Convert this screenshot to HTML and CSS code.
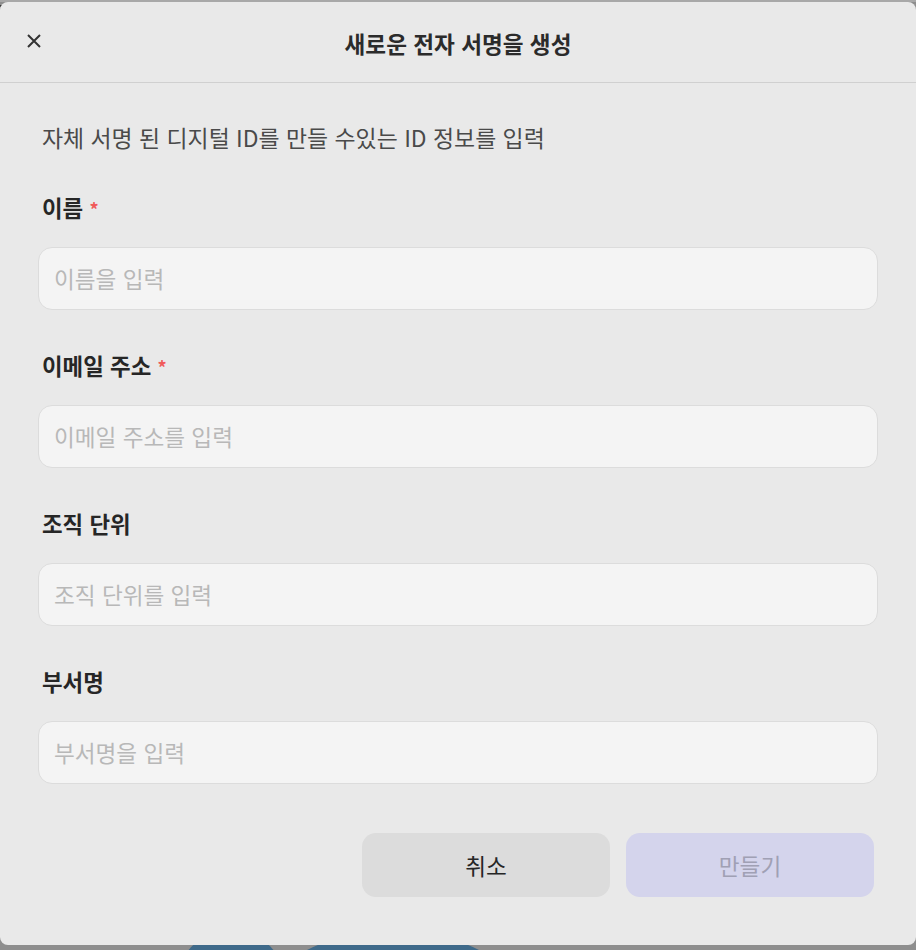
FILE: index.html
```html
<!DOCTYPE html>
<html lang="ko">
<head>
  <meta charset="UTF-8">
  <meta name="viewport" content="width=device-width, initial-scale=1.0">
  <title>새로운 전자 서명을 생성</title>
  <link rel="stylesheet" href="styles.css">
</head>
<body>
  <div class="page">
    <div class="page-top">
      <svg width="520" height="2" viewBox="0 0 520 2">
        <g fill="#3c3c3c">
          <rect x="0" y="0" width="38" height="2"/>
          <rect x="58" y="0" width="12" height="2"/>
          <rect x="82" y="0" width="11" height="2"/>
          <rect x="114" y="0" width="12" height="2"/>
          <rect x="134" y="0" width="12" height="2"/>
          <rect x="158" y="0" width="41" height="2"/>
          <rect x="209" y="0" width="12" height="2"/>
          <rect x="282" y="0" width="10" height="2"/>
          <rect x="303" y="0" width="11" height="2"/>
          <rect x="330" y="0" width="12" height="2"/>
          <rect x="356" y="0" width="24" height="2"/>
          <rect x="390" y="0" width="39" height="2"/>
          <rect x="441" y="0" width="12" height="2"/>
          <rect x="457" y="0" width="10" height="2"/>
          <rect x="474" y="0" width="11" height="2"/>
          <rect x="508" y="0" width="11" height="2"/>
        </g>
      </svg>
    </div>
    <div class="page-art">
      <span class="blob blob-a"></span>
      <span class="blob blob-b"></span>
    </div>
  </div>

  <div class="overlay">
    <div class="dialog">
      <div class="dialog-header">
        <button class="close-btn" aria-label="닫기">
          <svg width="16" height="16" viewBox="0 0 16 16">
            <path d="M2 2 L14 14 M14 2 L2 14" stroke="#333" stroke-width="2" fill="none"/>
          </svg>
        </button>
        <h1>새로운 전자 서명을 생성</h1>
      </div>

      <div class="dialog-body">
        <p class="intro">자체 서명 된 디지털 ID를 만들 수있는 ID 정보를 입력</p>

        <div class="field">
          <label for="name">이름 <span class="req">*</span></label>
          <input type="text" id="name" placeholder="이름을 입력">
        </div>
        <div class="field">
          <label for="email">이메일 주소 <span class="req">*</span></label>
          <input type="text" id="email" placeholder="이메일 주소를 입력">
        </div>
        <div class="field">
          <label for="unit">조직 단위</label>
          <input type="text" id="unit" placeholder="조직 단위를 입력">
        </div>
        <div class="field">
          <label for="dept">부서명</label>
          <input type="text" id="dept" placeholder="부서명을 입력">
        </div>

        <div class="actions">
          <button class="btn btn-cancel">취소</button>
          <button class="btn btn-create" disabled>만들기</button>
        </div>
      </div>
    </div>
  </div>
</body>
</html>
```

FILE: styles.css
```css
body {
  margin: 0;
  font-family: 'Noto Sans CJK KR', 'Noto Sans', sans-serif;
  background-color: #8e8e8e;
  height: 950px;
  overflow: hidden;
}
.page {
  height: 950px;
  position: relative;
}
.page-top {
  height: 2px;
  background-color: #a8a8a8;
  line-height: 0;
}
.page-art {
  position: absolute;
  left: 0;
  bottom: 0;
  width: 100%;
  height: 20px;
  overflow: hidden;
}
.blob {
  position: absolute;
  top: 0;
  border-radius: 50%;
  background-color: #3f6a8a;
}
.blob-a {
  left: 176px;
  width: 110px;
  height: 110px;
}
.blob-b {
  left: 198px;
  width: 390px;
  height: 390px;
}
.overlay {
  position: absolute;
  top: 0;
  left: 0;
  right: 0;
  bottom: 0;
  padding-top: 2px;
}
.dialog {
  background-color: #e9e9e9;
  border-radius: 8px;
  height: 943px;
}
.dialog-header {
  height: 80px;
  border-bottom: 1px solid #d0d0d0;
  display: flex;
  align-items: center;
  justify-content: center;
  position: relative;
}
.dialog-header h1 {
  margin: 0;
  font-size: 22.6px;
  font-weight: bold;
  color: #2b2b2b;
  padding-top: 2px;
}
.close-btn {
  position: absolute;
  left: 22px;
  top: 27px;
  background: none;
  border: none;
  padding: 4px;
  cursor: pointer;
  line-height: 0;
}
.dialog-body {
  padding: 34px 38px 0 38px;
}
.intro {
  margin: 0 0 35px 4px;
  font-size: 22.9px;
  color: #4a4a4a;
  line-height: 40px;
}
.field {
  margin-bottom: 40px;
}
label {
  display: block;
  height: 30px;
  margin: 0 0 25px 4px;
  font-size: 22.4px;
  font-weight: bold;
  color: #262626;
  line-height: 30px;
}
.req {
  color: #f05a5a;
  font-size: 18px;
  line-height: 1;
}
input {
  display: block;
  width: 100%;
  box-sizing: border-box;
  height: 63px;
  padding: 0 15px;
  font-family: inherit;
  font-size: 22.6px;
  background-color: #f4f4f4;
  border: 1px solid #dcdcdc;
  border-radius: 14px;
  color: #333;
  outline: none;
}
input::placeholder {
  color: #b8b8b8;
}
.actions {
  display: flex;
  justify-content: flex-end;
  gap: 16px;
  margin-top: 49px;
  padding-right: 4px;
}
.btn {
  width: 248px;
  height: 64px;
  border: none;
  border-radius: 14px;
  font-family: inherit;
  font-size: 22.6px;
}
.btn-cancel {
  background-color: #dcdcdc;
  color: #262626;
  cursor: pointer;
}
.btn-create {
  background-color: #d4d4ec;
  color: #a0a0b4;
}
```
